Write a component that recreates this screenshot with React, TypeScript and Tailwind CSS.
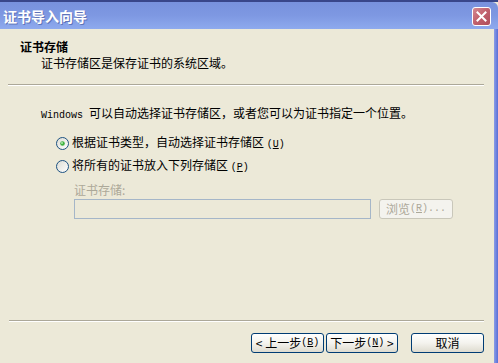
import React from "react";

const Radio = ({ checked }: { checked?: boolean }) => (
  <svg width="13" height="13" viewBox="0 0 13 13" className="shrink-0">
    <defs>
      <linearGradient id={checked ? "rg1" : "rg2"} x1="0" y1="0" x2="1" y2="1">
        <stop offset="0" stopColor="#dcdcd3" />
        <stop offset="1" stopColor="#ffffff" />
      </linearGradient>
    </defs>
    <circle cx="6.5" cy="6.5" r="6" fill={`url(#${checked ? "rg1" : "rg2"})`} stroke="#1c5180" strokeWidth="1" />
    {checked && <circle cx="6.5" cy="6.5" r="2.3" fill="#3fb03f" />}
    {checked && <circle cx="6" cy="6" r="0.9" fill="#b8f0b8" />}
  </svg>
);

const Btn = ({ children, className = "" }: { children: React.ReactNode; className?: string }) => (
  <div
    className={`h-[20px] flex items-center justify-center rounded-[3px] border border-[#003c74] bg-gradient-to-b from-[#ffffff] via-[#f4f3ee] to-[#dedbcf] text-[12px] leading-[14px] text-black ${className}`}
  >
    {children}
  </div>
);

const M = ({ children }: { children: React.ReactNode }) => (
  <span className="font-['Liberation_Mono',monospace] text-[10px]">{children}</span>
);

export default function App() {
  return (
    <div
      className="w-[498px] h-[363px] flex flex-col overflow-hidden bg-[#ece9d8] text-[12px] text-black"
      style={{ fontFamily: '"Noto Sans CJK SC", "Noto Sans", sans-serif' }}
    >
      <div className="h-[2px] bg-[#39468a] shrink-0" />
      {/* title bar */}
      <div className="h-[27px] shrink-0 flex items-center justify-between bg-gradient-to-b from-[#7891dd] via-[#7e98e2] to-[#8eaaee] rounded-tr-[6px]">
        <span className="pl-[3px] text-[14px] leading-[16px] font-bold text-white [text-shadow:1px_1px_0_#5f74b8]">
          证书导入向导
        </span>
        <div className="mr-[7px] mt-[1px] w-[19px] h-[19px] rounded-[3px] border border-white bg-gradient-to-br from-[#d58a92] via-[#c0606c] to-[#b04e5c] flex items-center justify-center">
          <svg width="11" height="11" viewBox="0 0 11 11">
            <path d="M1.5 1.5 L9.5 9.5 M9.5 1.5 L1.5 9.5" stroke="white" strokeWidth="2" strokeLinecap="square" />
          </svg>
        </div>
      </div>
      <div className="flex flex-1 min-h-0">
        <div className="flex-1 flex flex-col">
          {/* header */}
          <div className="mt-[10px] pl-[20px] leading-[16px] font-bold">证书存储</div>
          <div className="pl-[41px] leading-[16px]">证书存储区是保存证书的系统区域。</div>
          <div className="mt-[13px] ml-[8px] mr-[10px] border-t border-[#aca899] border-b border-b-white" />
          {/* body */}
          <div className="mt-[19px] pl-[41px] leading-[16px]">
            <span className="font-['Liberation_Mono',monospace] text-[10px]">Windows </span>
            可以自动选择证书存储区，或者您可以为证书指定一个位置。
          </div>
          <div className="mt-[10px] pl-[56px] flex items-center gap-[3px] leading-[16px]">
            <Radio checked />
            <span>
              根据证书类型，自动选择证书存储区 <M>(<u>U</u>)</M>
            </span>
          </div>
          <div className="mt-[4px] pl-[56px] flex items-center gap-[3px] leading-[16px]">
            <Radio />
            <span>
              将所有的证书放入下列存储区 <M>(<u>P</u>)</M>
            </span>
          </div>
          <div className="mt-[6px] pl-[74px] leading-[16px] text-[#aca899]">证书存储:</div>
          <div className="mt-[1px] pl-[74px] flex items-center gap-[8px]">
            <div className="w-[297px] h-[20px] border border-[#a5b6c8] bg-[#ece9d8]" />
            <div className="w-[74px] h-[20px] rounded-[3px] border border-[#c9c7ba] bg-[#f4f3ee] flex items-center justify-center text-[#aca899] leading-[14px]">
              浏览 <M>(<u>R</u>)...</M>
            </div>
          </div>
          <div className="flex-1" />
          <div className="ml-[9px] mr-[10px] border-t border-[#aca899] border-b border-b-white" />
          <div className="mt-[11px] mb-[10px] flex items-center pl-[251px]">
            <Btn className="w-[73px]">
              &lt; 上一步 <M>(<u>B</u>)</M>
            </Btn>
            <Btn className="w-[72px] ml-[2px]">
              下一步 <M>(<u>N</u>)</M>&nbsp;&gt;
            </Btn>
            <Btn className="w-[73px] ml-[13px]">取消</Btn>
          </div>
        </div>
        <div className="w-[4px] bg-gradient-to-r from-[#8a9ce6] to-[#5a6fd6]" />
      </div>
    </div>
  );
}
